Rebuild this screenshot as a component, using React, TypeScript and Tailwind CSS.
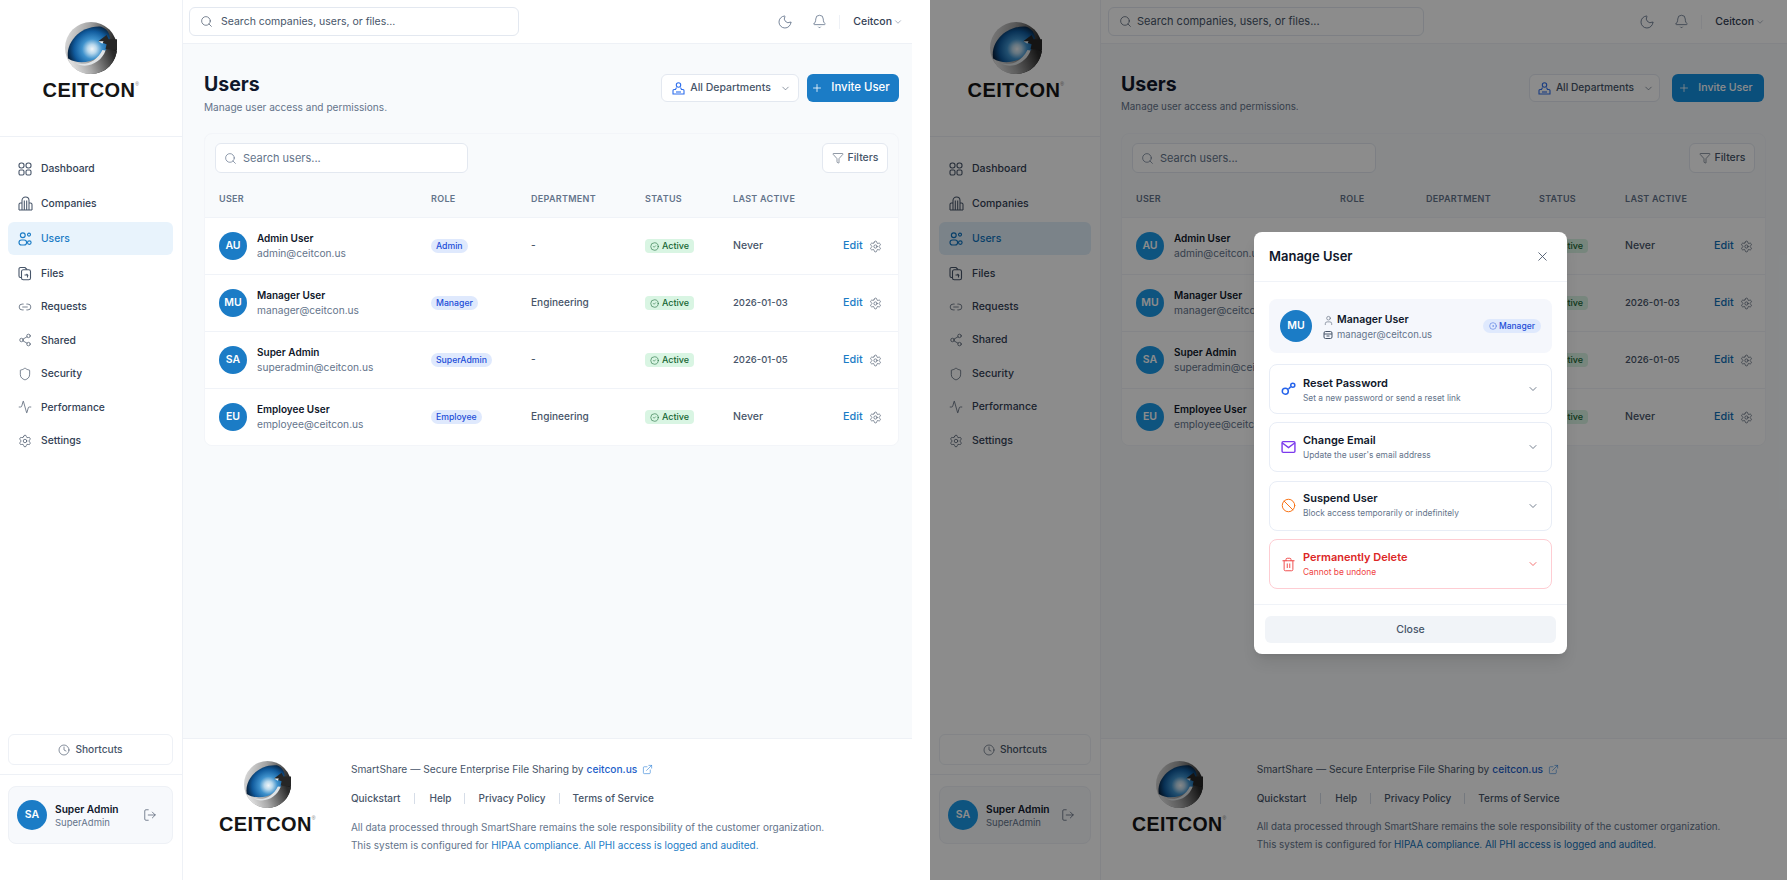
import React from "react";
import { Search, Link2, Share2, Shield, Activity, Settings, Clock, LogOut, Funnel, Moon, Bell, ChevronDown, Plus, X, ExternalLink, CircleCheck, User, Ban, Trash2, CircleDot } from "lucide-react";

const LEFT = {
  screen: "w-[912px]",
  side: "w-[183px]",
  sideBox: "ml-2 mr-[9px]",
  item: "pl-[10px] pr-2 gap-[9px] text-[10.3px]",
  search: "ml-[6px] w-[330px] gap-[8px] text-[10.5px]",
  cardSearch: "w-[253px]",
  topR: "pr-[9px]",
  main: "pl-[21px] pr-[13px]",
  cols: "grid-cols-[212px_100px_114px_88px_1fr]",
  lastW: "w-[110px]",
  logoBox: "pl-0",
  footPad: "pl-[36px] gap-[35px]",
  footLogo: "text-[20px]",
  footMeta: "text-[10px]",
  sub: "text-[10.1px]",
  avatar: "bg-[#1b7cc6]",
  invite: "bg-[#1b7cc6]",
  inviteText: "text-[11.4px]",
  link: "text-[#1b7cc6]",
  active: "bg-[#e8f3fc] text-[#1b7cc6]",
  dept: "w-[138px] mr-[8px] text-[10.5px]",
  invW: "w-[92px]",
  invEdge: "mr-0",
};
const RIGHT = {
  screen: "w-[857px]",
  side: "w-[171px]",
  sideBox: "mx-[9px]",
  item: "pl-[10px] pr-2 gap-[9px] text-[10.5px]",
  search: "ml-[7px] w-[316px] gap-[5px] text-[11px]",
  cardSearch: "w-[244px]",
  topR: "pr-[22px]",
  main: "pl-[20px] pr-[21px]",
  cols: "grid-cols-[204px_86px_113px_86px_1fr]",
  lastW: "w-[89px]",
  logoBox: "pl-[2px]",
  footPad: "pl-[31px] gap-[30px]",
  footLogo: "text-[19.5px]",
  footMeta: "text-[9.8px]",
  sub: "text-[9.8px]",
  avatar: "bg-[#1b9ae8]",
  invite: "bg-[#1390e0]",
  inviteText: "text-[10.6px]",
  link: "text-[#0f6fb8]",
  active: "bg-[#e0eefa] text-[#0f74bf]",
  dept: "w-[131px] mr-[12px] text-[10.2px]",
  invW: "w-[92px]",
  invEdge: "mr-[2px]",
};
type V = typeof LEFT;

function Globe({ size, id }: { size: number; id: string }) {
  return (
    <svg width={size} height={size} viewBox="0 0 100 100" className="block">
      <defs>
        <linearGradient id={id + "s"} x1="0" y1="0.2" x2="1" y2="0.5">
          <stop offset="0" stopColor="#dedede" />
          <stop offset="0.4" stopColor="#a2a2a2" />
          <stop offset="0.75" stopColor="#4a4a4a" />
          <stop offset="1" stopColor="#161616" />
        </linearGradient>
        <linearGradient id={id + "b"} x1="0" y1="0.8" x2="1" y2="0.6">
          <stop offset="0" stopColor="#f0f0f0" />
          <stop offset="0.45" stopColor="#a8a8a8" />
          <stop offset="1" stopColor="#2b2b2b" />
        </linearGradient>
        <radialGradient id={id + "r"} gradientUnits="userSpaceOnUse" cx="52" cy="52" r="48">
          <stop offset="0" stopColor="#f2f6f9" />
          <stop offset="0.18" stopColor="#b9d8ec" />
          <stop offset="0.4" stopColor="#3e91cc" />
          <stop offset="0.72" stopColor="#105a9c" />
          <stop offset="1" stopColor="#071f3a" />
        </radialGradient>
      </defs>
      <circle cx="50" cy="50" r="50" fill={`url(#${id}s)`} />
      <path d="M6 70 C12 90 32 100 50 100 C74 100 94 84 100 56 L72 52 C64 72 34 84 6 70Z" fill={`url(#${id}b)`} />
      <path d="M6 70 C0 40 30 6 70 9 C84 14 90 28 84 44 C74 70 34 88 6 70Z" fill={`url(#${id}r)`} />
      <path d="M20 79 C42 86 62 74 72 54 L78 55 C70 78 42 92 20 79Z" fill="#dfe3e6" />
      <path d="M64 37 L80 25 L84 33 L100 33 L100 54 L78 52 L80 43Z" fill="#262626" />
      <path d="M64 37 L74 37 L72 42Z" fill="#e6edf2" />
    </svg>
  );
}

function Logo({ size, id, text = "text-[20px]" }: { size: number; id: string; text?: string }) {
  return (
    <div className="flex flex-col items-center">
      <Globe size={size} id={id} />
      <div className={`mt-[4px] flex items-start font-['Liberation_Sans',sans-serif] font-bold leading-[24px] tracking-[0.4px] text-[#151515] ${text}`}>
        CEITCON<span className="mt-[4px] text-[5px] font-normal leading-[5px] text-[#777]">®</span>
      </div>
    </div>
  );
}

const I = "shrink-0 text-[#475569]";
function DashIcon() {
  return (
    <svg width="14" height="14" viewBox="0 0 14 14" fill="none" stroke="currentColor" strokeWidth="1.1" className={I}>
      <rect x="1" y="1" width="5" height="5" rx="2.2" /><rect x="8" y="1" width="5" height="5" rx="2.2" /><rect x="1" y="8" width="5" height="5" rx="1.4" /><rect x="8" y="8" width="5" height="5" rx="1.4" />
    </svg>
  );
}
function BuildingIcon() {
  return (
    <svg width="15" height="15" viewBox="0 0 15 15" fill="none" stroke="currentColor" strokeWidth="1.05" className={I}>
      <path d="M4 14V4.5C4 2.5 5.5 1 7.5 1S11 2.5 11 4.5V14" /><path d="M1 14V8.5C1 7.6 1.8 7 2.5 7H4M11 7h1.5C13.3 7 14 7.6 14 8.5V14" /><path d="M1 14h13M6.3 4.5V14M8.7 4.5V14" />
    </svg>
  );
}
function UsersIcon() {
  return (
    <svg width="14" height="14" viewBox="0 0 14 14" fill="none" stroke="currentColor" strokeWidth="1.15" className="shrink-0">
      <circle cx="4.8" cy="3.2" r="2.4" /><circle cx="11" cy="2.6" r="1.5" /><rect x="1" y="8" width="7.6" height="5" rx="2.5" /><circle cx="11.3" cy="10.6" r="1.8" />
    </svg>
  );
}
function FilesIcon() {
  return (
    <svg width="14" height="15" viewBox="0 0 14 15" fill="none" stroke="currentColor" strokeWidth="1.1" className={I}>
      <path d="M3.5 11.5H2.5A1.5 1.5 0 0 1 1 10V3A1.5 1.5 0 0 1 2.5 1.5H7L9 3.5" /><rect x="3.5" y="3.8" width="9" height="10" rx="1.8" /><path d="M6.5 9H9.5L8.5 8M9.5 9.600V11.5" />
    </svg>
  );
}
function DeptIcon() {
  return (
    <svg width="13" height="13" viewBox="0 0 13 13" fill="none" stroke="#2f6fed" strokeWidth="1.1" className="shrink-0">
      <circle cx="6.5" cy="3" r="2.2" /><path d="M4.5 5.5 L3.5 7.5 H2 A1 1 0 0 0 1 8.5 V12 H12 V8.5 A1 1 0 0 0 11 7.5 H9.5 L8.5 5.5" /><path d="M4 10h5" />
    </svg>
  );
}

function NavItem({ v, icon, label, active, h }: { v: V; icon: React.ReactNode; label: string; active?: boolean; h: string }) {
  return (
    <div className={`flex items-center rounded-md font-medium ${h} ${v.item} ${v.sideBox} ${active ? v.active : "text-[#334155]"}`}>
      <span className="flex w-[14px] shrink-0 items-center justify-center">{icon}</span>
      {label}
    </div>
  );
}

function Sidebar({ v, id }: { v: V; id: string }) {
  const lu = (C: typeof Search) => <C size={14} strokeWidth={1.25} className={I} />;
  return (
    <aside className={`flex h-full shrink-0 flex-col border-r border-[#eef1f6] bg-white ${v.side}`}>
      <div className={`flex h-[137px] shrink-0 justify-center border-b border-[#eef1f6] pt-[22px] ${v.logoBox}`}>
        <Logo size={52} id={id + "a"} />
      </div>
      <nav className="flex-1 pt-[15px]">
        <div className="flex flex-col gap-[2px]">
          <NavItem v={v} h="h-[33px]" icon={<DashIcon />} label="Dashboard" />
          <NavItem v={v} h="h-[33px]" icon={<BuildingIcon />} label="Companies" />
          <NavItem v={v} h="h-[33px]" active icon={<UsersIcon />} label="Users" />
          <NavItem v={v} h="h-[33px]" icon={<FilesIcon />} label="Files" />
        </div>
        <div className="flex flex-col">
          <NavItem v={v} h="h-[33.5px]" icon={lu(Link2)} label="Requests" />
          <NavItem v={v} h="h-[33.5px]" icon={lu(Share2)} label="Shared" />
          <NavItem v={v} h="h-[33.5px]" icon={lu(Shield)} label="Security" />
          <NavItem v={v} h="h-[33.5px]" icon={lu(Activity)} label="Performance" />
          <NavItem v={v} h="h-[33.5px]" icon={lu(Settings)} label="Settings" />
        </div>
      </nav>
      <div className={`mb-[9px] flex h-[31px] items-center justify-center gap-[5px] rounded-md border border-[#eef1f6] pt-px text-[10.2px] font-medium text-[#475569] ${v.sideBox}`}>
        <Clock size={12} strokeWidth={1.3} /> Shortcuts
      </div>
      <div className="h-[106px] shrink-0 border-t border-[#eef1f6] pt-[11px]">
        <div className={`flex h-[58px] items-center rounded-lg border border-[#eef1f6] bg-[#f7f9fc] pl-[8px] pr-[15px] ${v.sideBox}`}>
          <div className={`flex h-[30px] w-[30px] shrink-0 items-center justify-center rounded-full text-[10.5px] font-semibold text-white ${v.avatar}`}>SA</div>
          <div className="ml-[8px] flex-1 pt-[2px] leading-none">
            <div className="text-[10.2px] font-semibold text-[#0f172a]">Super Admin</div>
            <div className="mt-[4px] text-[9.5px] text-[#64748b]">SuperAdmin</div>
          </div>
          <LogOut size={14} strokeWidth={1.2} className="text-[#475569]" />
        </div>
      </div>
    </aside>
  );
}

const users = [
  ["AU", "Admin User", "admin@ceitcon.us", "Admin", "-", "Never"],
  ["MU", "Manager User", "manager@ceitcon.us", "Manager", "Engineering", "2026-01-03"],
  ["SA", "Super Admin", "superadmin@ceitcon.us", "SuperAdmin", "-", "2026-01-05"],
  ["EU", "Employee User", "employee@ceitcon.us", "Employee", "Engineering", "Never"],
];

function Card({ v }: { v: V }) {
  return (
    <div className="mt-[19px] overflow-hidden rounded-lg border border-[#f3f5f9]">
      <div className="flex h-[39px] items-end justify-between pl-[10px] pr-[10px]">
        <div className={`flex h-[30px] items-center gap-[6px] rounded-md border border-[#e3e8f0] bg-white pl-[8px] text-[11px] text-[#64748b] ${v.cardSearch}`}>
          <Search size={13} strokeWidth={1.3} /> Search users...
        </div>
        <div className="flex h-[30px] w-[66px] items-center justify-center gap-[4px] rounded-md border border-[#e3e8f0] bg-white text-[10.5px] font-medium text-[#475569]">
          <Funnel size={12} strokeWidth={1.2} /> Filters
        </div>
      </div>
      <div className={`grid h-[44px] items-center pl-[14px] pt-[8px] text-[9px] font-semibold tracking-[0.3px] text-[#64748b] ${v.cols}`}>
        <div>USER</div><div>ROLE</div><div>DEPARTMENT</div><div>STATUS</div><div>LAST ACTIVE</div>
      </div>
      {users.map((u) => (
        <div key={u[0]} className={`grid h-[57px] items-center border-t border-[#f0f3f8] bg-white pl-[14px] ${v.cols}`}>
          <div className="flex items-center gap-[10px]">
            <div className={`flex h-[28px] w-[28px] items-center justify-center rounded-full text-[10.5px] font-semibold text-white ${v.avatar}`}>{u[0]}</div>
            <div className="leading-none">
              <div className="text-[10px] font-semibold text-[#0f172a]">{u[1]}</div>
              <div className="mt-[5px] text-[10.2px] text-[#64748b]">{u[2]}</div>
            </div>
          </div>
          <div className="flex"><span className="rounded-full bg-[#dfe9fd] px-[5px] py-[2px] text-[8.7px] font-medium leading-[10px] text-[#1d4ed8]">{u[3]}</span></div>
          <div className="text-[10.1px] font-medium text-[#475569]">{u[4]}</div>
          <div className="flex">
            <span className="flex items-center gap-[3px] rounded bg-[#d9f5e3] px-[5px] py-[2px] text-[9px] font-medium leading-[10px] text-[#166534]">
              <CircleCheck size={9} strokeWidth={1.5} /> Active
            </span>
          </div>
          <div className="flex items-center">
            <div className={`shrink-0 font-medium text-[#475569] ${u[5] === "Never" ? "text-[10.5px]" : "text-[9.5px]"} ${v.lastW}`}>{u[5]}</div>
            <span className={`text-[10.8px] font-medium ${v.link}`}>Edit</span>
            <Settings size={13} strokeWidth={1.2} className="ml-[6px] text-[#475569]" />
          </div>
        </div>
      ))}
    </div>
  );
}

function Footer({ v, id }: { v: V; id: string }) {
  return (
    <footer className={`flex h-[142px] shrink-0 items-start border-t border-[#eef1f6] bg-white pt-[22px] ${v.footPad}`}>
      <Logo size={47} id={id + "f"} text={v.footLogo} />
      <div className="text-[#475569]">
        <div className="flex h-[17px] items-center text-[10.2px]">
          SmartShare — Secure Enterprise File Sharing by
          <span className="ml-[3px] font-medium text-[#1d5fc9]">ceitcon.us</span>
          <ExternalLink size={11} strokeWidth={1.3} className="ml-[5px] text-[#2b7fd6]" />
        </div>
        <div className="mt-[12px] flex h-[17px] items-center text-[10px] font-medium text-[#475569]">
          <span>Quickstart</span><i className="mx-[14px] h-[11px] w-px bg-[#d6dde8]" />
          <span>Help</span><i className="mx-[13px] h-[11px] w-px bg-[#d6dde8]" />
          <span>Privacy Policy</span><i className="mx-[13px] h-[11px] w-px bg-[#d6dde8]" />
          <span>Terms of Service</span>
        </div>
        <div className={`mt-[11px] leading-[18px] text-[#64748b] ${v.footMeta}`}>
          <div>All data processed through SmartShare remains the sole responsibility of the customer organization.</div>
          <div>This system is configured for <span className={v.link}>HIPAA compliance. All PHI access is logged and audited.</span></div>
        </div>
      </div>
    </footer>
  );
}

function Screen({ v, id }: { v: V; id: string }) {
  return (
    <div className={`flex h-full shrink-0 ${v.screen}`}>
      <Sidebar v={v} id={id} />
      <div className="flex h-full min-w-0 flex-1 flex-col bg-[#f8fafc]">
        <header className={`flex h-[44px] shrink-0 items-center border-b border-[#eef1f6] bg-white ${v.topR}`}>
          <div className={`flex h-[29px] items-center rounded-md border border-[#e3e8f0] bg-white pl-[10px] text-[#475569] ${v.search}`}>
            <Search size={13} strokeWidth={1.3} className="shrink-0 text-[#475569]" /> Search companies, users, or files...
          </div>
          <div className="ml-auto flex items-center text-[#64748b]">
            <Moon size={16} strokeWidth={1.3} />
            <Bell size={15} strokeWidth={1.3} className="ml-[19px]" />
            <i className="ml-[12px] h-[14px] w-px bg-[#eef1f6]" />
            <span className="ml-[13px] text-[10.5px] font-medium text-[#334155]">Ceitcon</span>
            <ChevronDown size={10} strokeWidth={1.3} className="ml-px" />
          </div>
        </header>
        <main className={`min-h-0 flex-1 ${v.main}`}>
          <div className="flex items-start justify-between pt-[29px]">
            <div>
              <h1 className="text-[19.5px] font-bold leading-[22px] text-[#0f172a]">Users</h1>
              <p className={`mt-[5px] leading-[14px] text-[#64748b] ${v.sub}`}>Manage user access and permissions.</p>
            </div>
            <div className={`flex pt-px ${v.invEdge}`}>
              <div className={`flex h-[28px] items-center justify-center gap-[5px] rounded-md border border-[#e3e8f0] bg-white pl-[3px] font-medium text-[#475569] ${v.dept}`}>
                <DeptIcon /> All Departments <ChevronDown size={11} strokeWidth={1.3} className="ml-[4px]" />
              </div>
              <div className={`flex h-[28px] items-center justify-center gap-[8px] rounded-md pr-[5px] font-medium text-white ${v.invite} ${v.invW} ${v.inviteText}`}>
                <Plus size={12} strokeWidth={1.6} /> Invite User
              </div>
            </div>
          </div>
          <Card v={v} />
        </main>
        <Footer v={v} id={id} />
      </div>
    </div>
  );
}

function Item({ icon, title, sub, danger, textPad = "" }: { icon: React.ReactNode; title: string; sub: string; danger?: boolean; textPad?: string }) {
  return (
    <div className={`flex h-[50px] items-center rounded-lg border pl-[11px] pr-[12px] ${danger ? "border-[#fecdd3]" : "border-[#e8edf6]"}`}>
      <span className="flex w-[15px] shrink-0 justify-center">{icon}</span>
      <div className={`ml-[7px] flex-1 leading-none ${textPad}`}>
        <div className={`text-[11px] font-semibold ${danger ? "text-[#dc2626]" : "text-[#0f172a]"}`}>{title}</div>
        <div className={`mt-[5px] text-[8.4px] ${danger ? "text-[#ef4444]" : "text-[#64748b]"}`}>{sub}</div>
      </div>
      <ChevronDown size={12} strokeWidth={1.5} className={danger ? "text-[#ef4444]" : "text-[#475569]"} />
    </div>
  );
}

function Modal() {
  return (
    <div className="absolute left-[324px] top-[232px] w-[313px] rounded-lg bg-white shadow-lg">
      <div className="flex h-[50px] items-center justify-between border-b border-[#f0f3f8] pl-[15px] pr-[17px]">
        <h2 className="text-[13px] font-semibold text-[#0f172a]">Manage User</h2>
        <X size={15} strokeWidth={1.4} className="text-[#475569]" />
      </div>
      <div className="flex flex-col gap-[8.5px] border-b border-[#f0f3f8] px-[15px] pb-[15px] pt-[17px]">
        <div className="mb-[2px] flex h-[54px] items-center rounded-lg bg-[#f5f7fc] pl-[11px] pr-[11px]">
          <div className="flex h-[32px] w-[32px] items-center justify-center rounded-full bg-[#1b7cc6] text-[10.5px] font-semibold text-white">MU</div>
          <div className="ml-[11px] flex-1 pt-[2px] leading-none">
            <div className="flex items-center gap-[3px] text-[10.5px] font-semibold text-[#0f172a]"><User size={11} strokeWidth={1.2} className="text-[#475569]" /> Manager User</div>
            <div className="mt-[4px] flex items-center gap-[4px] text-[9.5px] text-[#64748b]">
              <svg width="10" height="10" viewBox="0 0 10 10" fill="none" stroke="#475569" strokeWidth="1"><rect x="1" y="1.5" width="8" height="7" rx="1.5" /><path d="M1 4h8M3.5 6h3" /></svg>
              manager@ceitcon.us
            </div>
          </div>
          <span className="flex h-[14px] items-center gap-[2px] rounded-full bg-[#dfe9fd] px-[6px] text-[8.5px] font-medium text-[#1d4ed8]"><CircleDot size={8} strokeWidth={1.3} /> Manager</span>
        </div>
        <Item textPad="pt-[3px]" title="Reset Password" sub="Set a new password or send a reset link" icon={
          <svg width="15" height="15" viewBox="0 0 14 14" fill="none" stroke="#2563eb" strokeWidth="1.4"><circle cx="4" cy="9.5" r="2.8" /><circle cx="11" cy="4" r="1.9" /><path d="M7 7.5L9 5.5" /></svg>
        } />
        <Item title="Change Email" sub="Update the user's email address" icon={
          <svg width="15" height="14" viewBox="0 0 14 13" fill="none" stroke="#7c3aed" strokeWidth="1.3"><rect x="1" y="1.5" width="12" height="10" rx="1" /><path d="M1 2.5L7 7L13 2.5" /></svg>
        } />
        <Item title="Suspend User" sub="Block access temporarily or indefinitely" icon={<Ban size={15} strokeWidth={1.6} className="text-[#f97316]" />} />
        <Item danger title="Permanently Delete" sub="Cannot be undone" icon={<Trash2 size={15} strokeWidth={1.5} className="text-[#ef4444]" />} />
      </div>
      <div className="px-[11px] pb-[11px] pt-[11px]">
        <div className="flex h-[27px] items-center justify-center rounded-md bg-[#f1f4f8] text-[10.5px] font-medium text-[#475569]">Close</div>
      </div>
    </div>
  );
}

export default function App() {
  return (
    <div className="flex h-[880px] w-[1787px] overflow-hidden bg-white font-['Inter',sans-serif]">
      <Screen v={LEFT} id="l" />
      <div className="w-[18px] shrink-0" />
      <div className="relative shrink-0">
        <Screen v={RIGHT} id="r" />
        <div className="absolute inset-0 bg-black/45" />
        <Modal />
      </div>
    </div>
  );
}
